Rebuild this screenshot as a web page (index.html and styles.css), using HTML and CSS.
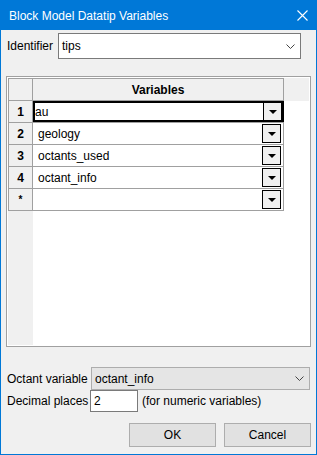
FILE: index.html
```html
<!DOCTYPE html>
<html lang="en">
<head>
  <meta charset="UTF-8">
  <title>Block Model Datatip Variables</title>
  <link rel="stylesheet" href="styles.css">
</head>
<body>

  <div class="window">
    <!-- title bar -->
    <div class="titlebar">
      <span class="title">Block Model Datatip Variables</span>
      <svg class="close" width="11" height="11" viewBox="0 0 11 11">
        <path d="M0.5 0.5 L10.5 10.5 M10.5 0.5 L0.5 10.5" stroke="#fff" stroke-width="1.1" fill="none"/>
      </svg>
    </div>

    <div class="content">
      <div class="ident-row">
        <label class="lbl ident-lbl">Identifier</label>
        <div class="combo">
          <span>tips</span>
          <svg class="chev" width="9" height="5" viewBox="0 0 9 5"><path d="M0.5 0.5 L4.5 4.5 L8.5 0.5" stroke="#444" fill="none"/></svg>
        </div>
      </div>

      <!-- variables grid -->
      <div class="grid">
        <div class="grid-inner">
          <div class="grow head">
            <div class="rh"></div>
            <div class="cell">Variables</div>
            <div class="head-fill"></div>
          </div>
          <div class="grow">
            <div class="rh">1</div>
            <div class="cell"><div class="cell-box selected"><span>au</span><span class="dd"></span></div></div>
          </div>
          <div class="grow">
            <div class="rh">2</div>
            <div class="cell"><div class="cell-box"><span>geology</span><span class="dd"></span></div></div>
          </div>
          <div class="grow">
            <div class="rh">3</div>
            <div class="cell"><div class="cell-box"><span>octants_used</span><span class="dd"></span></div></div>
          </div>
          <div class="grow">
            <div class="rh">4</div>
            <div class="cell"><div class="cell-box"><span>octant_info</span><span class="dd"></span></div></div>
          </div>
          <div class="grow">
            <div class="rh star">*</div>
            <div class="cell"><div class="cell-box"><span></span><span class="dd"></span></div></div>
          </div>
          <div class="grid-fill"></div>
        </div>
      </div>

      <div class="octant-row">
        <label class="lbl octant-lbl">Octant variable</label>
        <div class="combo flat">
          <span>octant_info</span>
          <svg class="chev" width="9" height="5" viewBox="0 0 9 5"><path d="M0.5 0.5 L4.5 4.5 L8.5 0.5" stroke="#444" fill="none"/></svg>
        </div>
      </div>

      <div class="decimal-row">
        <label class="lbl decimal-lbl">Decimal places</label>
        <div class="textbox">2</div>
        <span class="hint">(for numeric variables)</span>
      </div>

      <div class="buttons">
        <button class="btn">OK</button>
        <button class="btn">Cancel</button>
      </div>
    </div>
  </div>

</body>
</html>
```

FILE: styles.css
```css
html, body {
  margin: 0;
}

body {
  font-family: "Liberation Sans", Arial, sans-serif;
  font-size: 12px;
  color: #000;
  background: #f0f0f0;
}

.window {
  width: 317px;
  height: 455px;
  box-sizing: border-box;
  border: 1px solid #0078d7;
  background: #f0f0f0;
  display: flex;
  flex-direction: column;
}

.titlebar {
  height: 29px;
  background: #0078d7;
  color: #fff;
  display: flex;
  align-items: center;
  padding-left: 8px;
}

.title {
  flex: 1;
  padding-top: 1px;
}

.close {
  margin-right: 8px;
}

.content {
  padding: 0 5px;
  display: flex;
  flex-direction: column;
}

.lbl {
  padding-left: 1px;
}

/* identifier */
.ident-row {
  margin-top: 3px;
  height: 26px;
  display: flex;
  align-items: center;
}

.ident-lbl {
  width: 51px;
}

.combo {
  width: 243px;
  height: 26px;
  box-sizing: border-box;
  border: 1px solid #7a7a7a;
  background: #fff;
  display: flex;
  align-items: center;
  padding-left: 3px;
  padding-right: 5px;
}

.combo span {
  flex: 1;
}

/* grid */
.grid {
  margin-top: 17px;
  height: 271px;
  box-sizing: border-box;
  border: 1px solid #a0a0a0;
  padding: 1px;
  background: #fff;
}

.grid-inner {
  height: 100%;
  display: flex;
  flex-direction: column;
}

.grow {
  display: flex;
  height: 22px;
}

.grow.head {
  height: 23px;
  background: #f0f0f0;
}

.rh {
  width: 23px;
  border-left: 1px solid #a0a0a0;
  border-right: 1px solid #a0a0a0;
  border-bottom: 1px solid #a0a0a0;
  background: #f0f0f0;
  font-weight: bold;
  display: flex;
  align-items: center;
  justify-content: center;
}

.rh.star {
  font-size: 10px;
}

.cell {
  width: 250px;
  border-right: 1px solid #a0a0a0;
  border-bottom: 1px solid #a0a0a0;
  background: #fff;
  display: flex;
}

.head .rh,
.head .cell {
  border-top: 1px solid #a0a0a0;
  background: #f0f0f0;
}

.head .cell {
  font-weight: bold;
  align-items: center;
  justify-content: center;
}

.head-fill {
  flex: 1;
}

.cell-box {
  flex: 1;
  display: flex;
  align-items: center;
  padding-left: 3px;
  padding-right: 1px;
  border: 2px solid transparent;
  margin-right: -1px;
}

.cell-box span:first-child {
  flex: 1;
}

.cell-box.selected {
  border-color: #000;
  padding-left: 0;
}

.dd {
  width: 17px;
  height: 17px;
  border: 1px solid #000;
  background: #f0f0f0;
  display: flex;
  align-items: center;
  justify-content: center;
}

.dd::after {
  content: "";
  border-left: 4px solid transparent;
  border-right: 4px solid transparent;
  border-top: 4px solid #000;
}

.cell-box.selected .dd {
  margin-right: -1px;
}

.grid-fill {
  flex: 1;
  width: 25px;
  background: #f0f0f0;
}

/* octant + decimals */
.octant-row {
  margin-top: 20px;
  height: 23px;
  display: flex;
  align-items: center;
}

.octant-lbl {
  width: 84px;
}

.combo.flat {
  width: 219px;
  height: 23px;
  border-color: #adadad;
  background: #e5e5e5;
}

.decimal-row {
  margin-top: 0;
  height: 22px;
  display: flex;
  align-items: center;
}

.decimal-lbl {
  width: 83px;
}

.textbox {
  width: 48px;
  height: 22px;
  box-sizing: border-box;
  border: 1px solid #7a7a7a;
  background: #fff;
  padding-left: 3px;
  display: flex;
  align-items: center;
}

.hint {
  margin-left: 4px;
}

.buttons {
  margin-top: 11px;
  display: flex;
  justify-content: flex-end;
  gap: 8px;
}

.btn {
  width: 87px;
  height: 24px;
  border: 1px solid #adadad;
  background: #e1e1e1;
  font-family: inherit;
  font-size: 12px;
  color: #000;
  padding: 0;
}
```
